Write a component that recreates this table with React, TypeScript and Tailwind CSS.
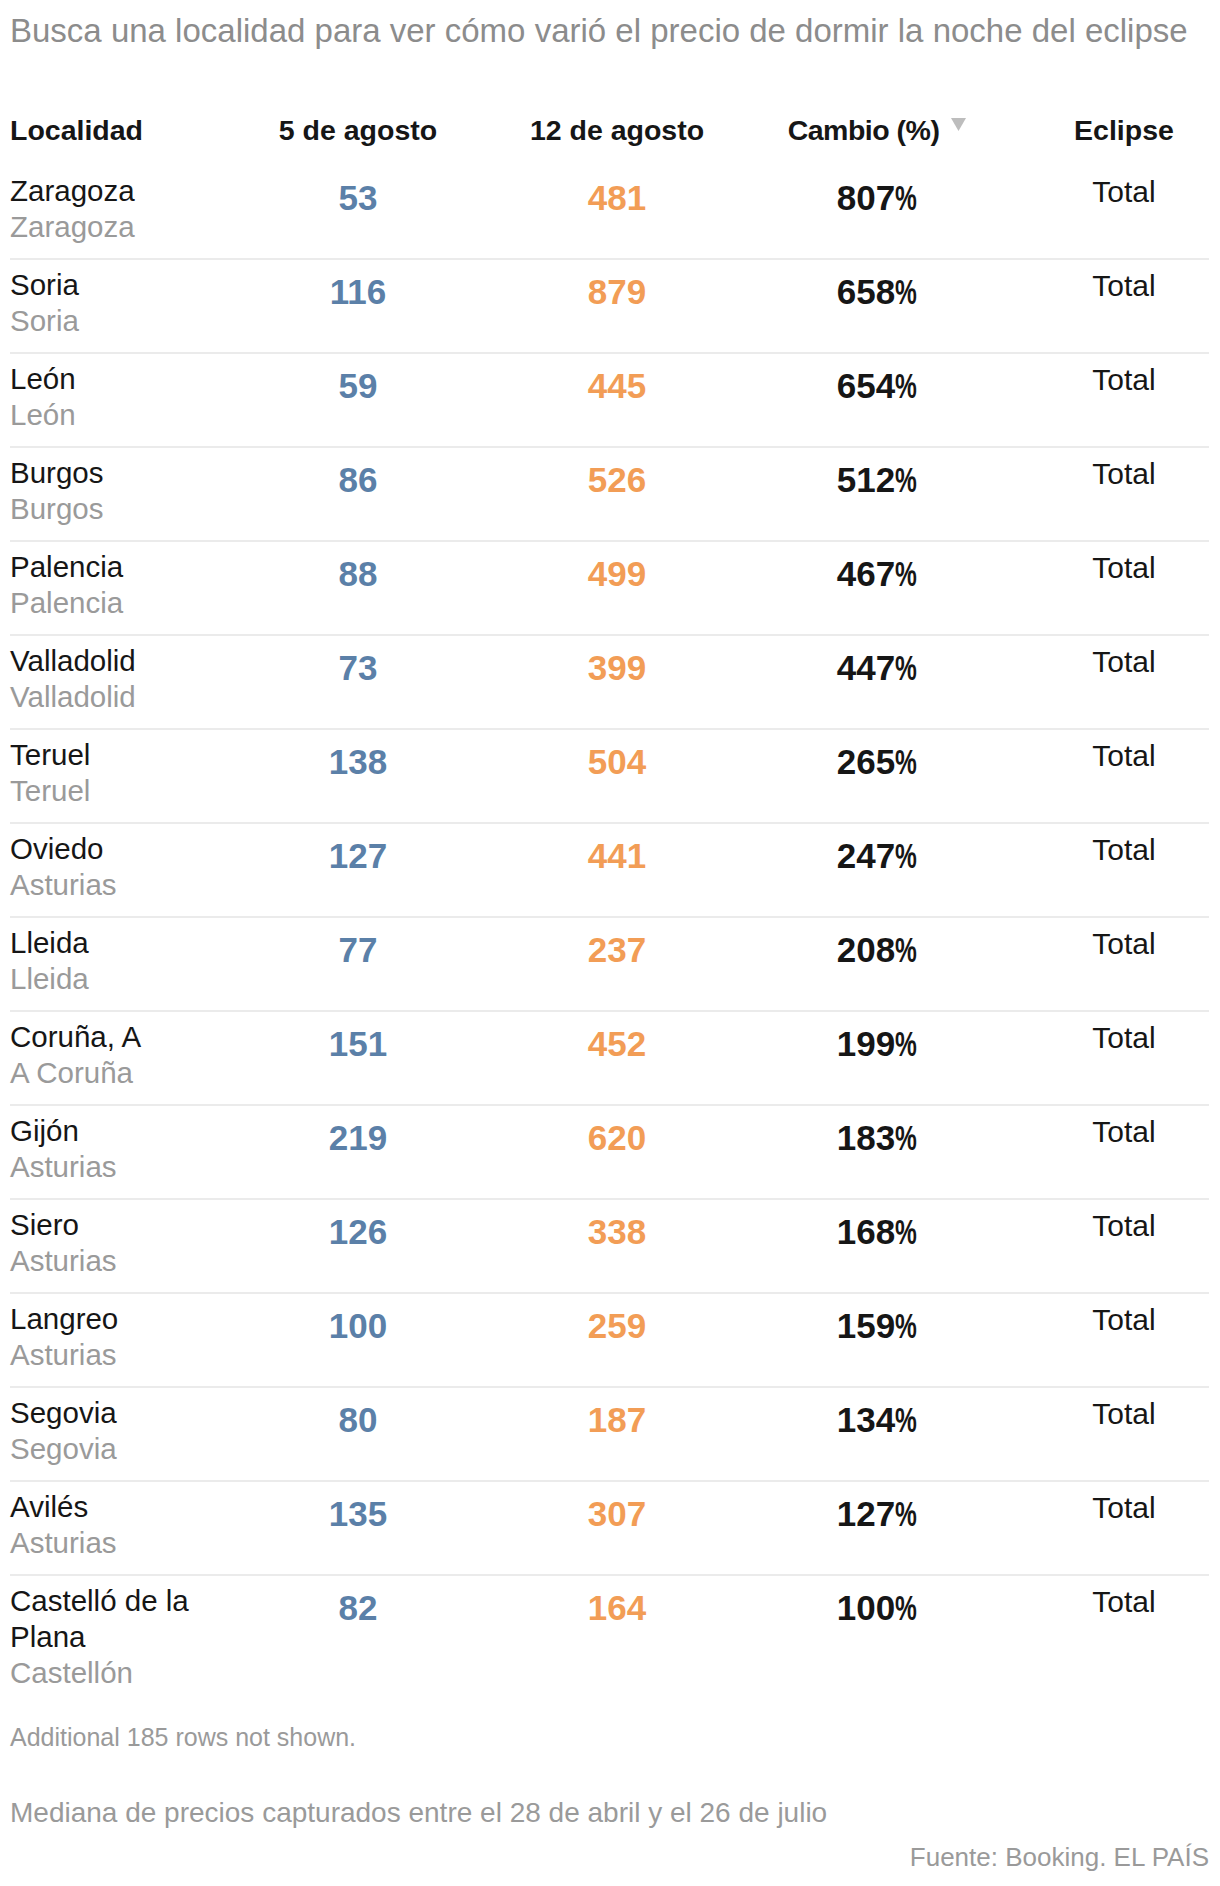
import React from 'react'

type Row = {
  city: string
  province: string
  before: number
  after: number
  change: number
  eclipse: string
}

const rows: Row[] = [
  { city: 'Zaragoza', province: 'Zaragoza', before: 53, after: 481, change: 807, eclipse: 'Total' },
  { city: 'Soria', province: 'Soria', before: 116, after: 879, change: 658, eclipse: 'Total' },
  { city: 'León', province: 'León', before: 59, after: 445, change: 654, eclipse: 'Total' },
  { city: 'Burgos', province: 'Burgos', before: 86, after: 526, change: 512, eclipse: 'Total' },
  { city: 'Palencia', province: 'Palencia', before: 88, after: 499, change: 467, eclipse: 'Total' },
  { city: 'Valladolid', province: 'Valladolid', before: 73, after: 399, change: 447, eclipse: 'Total' },
  { city: 'Teruel', province: 'Teruel', before: 138, after: 504, change: 265, eclipse: 'Total' },
  { city: 'Oviedo', province: 'Asturias', before: 127, after: 441, change: 247, eclipse: 'Total' },
  { city: 'Lleida', province: 'Lleida', before: 77, after: 237, change: 208, eclipse: 'Total' },
  { city: 'Coruña, A', province: 'A Coruña', before: 151, after: 452, change: 199, eclipse: 'Total' },
  { city: 'Gijón', province: 'Asturias', before: 219, after: 620, change: 183, eclipse: 'Total' },
  { city: 'Siero', province: 'Asturias', before: 126, after: 338, change: 168, eclipse: 'Total' },
  { city: 'Langreo', province: 'Asturias', before: 100, after: 259, change: 159, eclipse: 'Total' },
  { city: 'Segovia', province: 'Segovia', before: 80, after: 187, change: 134, eclipse: 'Total' },
  { city: 'Avilés', province: 'Asturias', before: 135, after: 307, change: 127, eclipse: 'Total' },
  { city: 'Castelló de la Plana', province: 'Castellón', before: 82, after: 164, change: 100, eclipse: 'Total' },
]

const grid = 'grid grid-cols-[220px_256px_262px_258px_1fr]'

function SortArrow() {
  return (
    <svg width="15" height="13" viewBox="0 0 15 13" className="mb-[12px] shrink-0">
      <path d="M0 0 L15 0 L7.5 13 Z" fill="#bdbdbd" />
    </svg>
  )
}

export default function App() {
  return (
    <div className="w-[1220px] bg-white px-[10px] font-['Liberation_Sans',Arial,sans-serif]">
      <p className="pt-[11px] text-[33px] leading-[40px] text-[#8c8c8c] whitespace-nowrap">
        Busca una localidad para ver cómo varió el precio de dormir la noche del eclipse
      </p>

      {/* Header */}
      <div className={`${grid} mt-[64px] pb-[21px] w-[1199px] text-[28.5px] leading-[30px] font-bold text-[#161616]`}>
        <div>Localidad</div>
        <div className="text-center">5 de agosto</div>
        <div className="text-center">12 de agosto</div>
        <div className="flex items-center justify-center gap-[12px]">
          <span className="tracking-[-0.5px]">Cambio (%)</span>
          <SortArrow />
        </div>
        <div className="pl-[33px] text-center">Eclipse</div>
      </div>

      {/* Rows */}
      <div className="w-[1199px]">
        {rows.map((r, i) => (
          <div
            key={r.city}
            className={`${grid} pb-[13px] ${i < rows.length - 1 ? 'border-b-2 border-[#ebebeb]' : ''}`}
          >
            <div className="pt-[7px] pr-4 text-[29.5px] leading-[36px]">
              <div className="text-[#161616]">{r.city}</div>
              <div className="text-[#9a9a9a]">{r.province}</div>
            </div>
            <div className="pt-[17px] text-center text-[35px] leading-[30px] font-bold text-[#5b80a8]">
              {r.before}
            </div>
            <div className="pt-[17px] text-center text-[35px] leading-[30px] font-bold text-[#f29d56]">
              {r.after}
            </div>
            <div className="pt-[17px] text-center text-[35px] leading-[30px] font-bold text-[#161616]">
              {r.change}
              <span className="inline-block origin-left scale-x-[0.7] -mr-[9px]">%</span>
            </div>
            <div className="pt-[8px] pl-[33px] text-center text-[30px] leading-[36px] text-[#161616]">
              {r.eclipse}
            </div>
          </div>
        ))}
      </div>

      <p className="mt-[18px] text-[25px] leading-[30px] text-[#9a9a9a]">Additional 185 rows not shown.</p>

      <p className="mt-[46px] text-[28px] leading-[30px] text-[#9a9a9a]">
        Mediana de precios capturados entre el 28 de abril y el 26 de julio
      </p>
      <p className="mt-[14px] w-[1199px] text-right text-[26px] leading-[30px] text-[#9a9a9a]">
        Fuente: Booking. EL PAÍS
      </p>
    </div>
  )
}
